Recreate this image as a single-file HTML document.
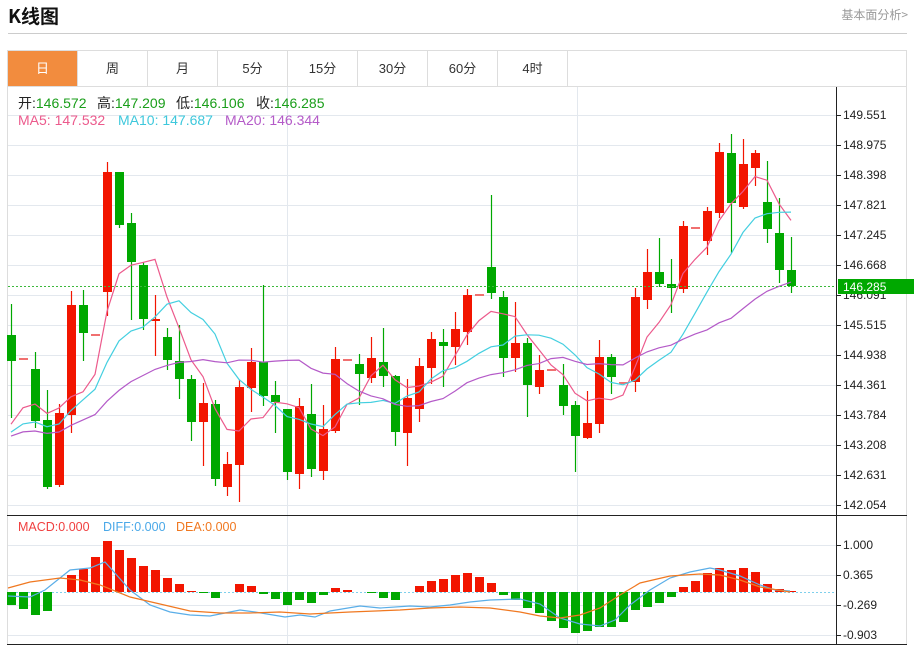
<!DOCTYPE html>
<html><head><meta charset="utf-8"><style>
*{margin:0;padding:0;box-sizing:border-box}
body{width:914px;height:647px;background:#fff;font-family:"Liberation Sans","Noto Sans CJK SC",sans-serif;position:relative;overflow:hidden}
.t{position:absolute;left:8px;top:2px;font-size:19px;font-weight:bold;color:#111;font-family:"Noto Sans CJK SC",sans-serif}
.more{position:absolute;right:6px;top:6px;font-size:12px;color:#999;font-family:"Noto Sans CJK SC",sans-serif}
.hl{position:absolute;left:8px;top:33px;width:899px;height:1px;background:#ccc}
.tabs{position:absolute;left:7px;top:50px;width:900px;height:37px;border:1px solid #ddd;display:flex}
.tabs div{width:70px;height:35px;border-right:1px solid #ddd;text-align:center;line-height:35px;font-size:13px;color:#333;font-family:"Liberation Sans","Noto Sans CJK SC",sans-serif}
.tabs div.on{background:#f28c3e;color:#fff}
svg{position:absolute;left:0;top:0}
</style></head><body>
<div class="t">K线图</div>
<div class="more">基本面分析&gt;</div>
<div class="hl"></div>
<div class="tabs"><div class="on">日</div><div>周</div><div>月</div><div>5分</div><div>15分</div><div>30分</div><div>60分</div><div>4时</div></div>
<svg id="s" width="914" height="647" xmlns="http://www.w3.org/2000/svg"></svg>
<script>
var C=[
[335,361,304,418,0],[358,358,358,358,2],[369,421,352,428,0],[420,487,390,489,0],[485,413,404,487,1],
[415,305,291,433,1],[305,333,290,361,0],[334,334,334,334,2],[292,172,162,316,1],[172,225,172,228,0],
[223,262,213,320,0],[265,319,262,330,0],[319,319,295,356,3],[337,360,328,370,0],[361,379,325,399,0],
[379,422,375,441,0],[422,403,383,466,1],[404,479,400,486,0],[487,464,452,496,1],[465,387,380,502,1],
[388,362,348,412,1],[362,396,285,406,0],[395,402,381,433,0],[409,472,409,480,0],[474,406,398,489,1],
[414,469,384,477,0],[471,429,405,480,1],[431,359,347,433,1],[359,359,359,359,2],[364,374,354,405,0],
[378,358,337,383,1],[362,376,328,387,0],[376,432,375,446,0],[433,398,379,466,1],[409,366,358,422,1],
[368,339,332,384,1],[342,346,329,387,0],[347,329,312,365,1],[332,295,289,345,1],[294,294,294,294,2],
[267,293,195,299,0],[297,358,291,377,0],[358,343,302,372,1],[343,385,338,417,0],[387,370,355,394,1],
[369,369,369,369,2],[385,406,364,415,0],[405,436,401,472,0],[438,423,391,439,1],[424,357,340,433,1],
[357,377,354,394,0],[382,382,382,382,2],[382,297,288,392,1],[300,272,249,309,1],[272,284,238,287,0],
[284,288,259,313,0],[289,226,221,293,1],[227,227,227,227,2],[241,211,207,255,1],[213,152,143,218,1],
[153,203,134,253,0],[207,164,139,209,1],[168,153,150,186,1],[202,229,161,243,0],[233,270,198,283,0],
[270,286,237,293,0]];
var M=[605,609,615,611,592,575,569,557,541,550,558,566,570,578,584,591,593,598,592,584,586,594,599,605,600,603,595,588,590,592,593,598,600,592,586,581,579,575,573,577,583,595,600,608,613,621,628,633,631,627,627,622,610,607,603,597,587,581,573,568,570,568,572,584,589,591];
var X=function(i){return 11+12*i};
var h='';
var ticks=[[115,'149.551'],[145,'148.975'],[175,'148.398'],[205,'147.821'],[235,'147.245'],[265,'146.668'],[295,'146.091'],[325,'145.515'],[355,'144.938'],[385,'144.361'],[415,'143.784'],[445,'143.208'],[475,'142.631'],[505,'142.054']];
ticks.forEach(function(t){h+='<line x1="8" x2="836" y1="'+t[0]+'.5" y2="'+t[0]+'.5" stroke="#e3e8ee"/>'});
[[545,'1.000'],[575,'0.365'],[605,'-0.269'],[635,'-0.903']].forEach(function(t){h+='<line x1="8" x2="836" y1="'+t[0]+'.5" y2="'+t[0]+'.5" stroke="#e3e8ee"/>';ticks.push(t)});
h+='<line x1="287.5" x2="287.5" y1="87" y2="645" stroke="#e3e8ee"/><line x1="577.5" x2="577.5" y1="87" y2="645" stroke="#e3e8ee"/>';
h+='<line x1="836.5" x2="836.5" y1="87" y2="645" stroke="#222"/>';
h+='<line x1="7.5" x2="7.5" y1="87" y2="645" stroke="#ddd"/><line x1="906.5" x2="906.5" y1="87" y2="645" stroke="#ddd"/>';
h+='<line x1="7" x2="907" y1="515.5" y2="515.5" stroke="#222"/><line x1="7" x2="907" y1="644.5" y2="644.5" stroke="#222"/>';
ticks.forEach(function(t){h+='<line x1="836" x2="841" y1="'+t[0]+'.5" y2="'+t[0]+'.5" stroke="#222"/><text x="843" y="'+(t[0]+4)+'" font-size="12" fill="#222">'+t[1]+'</text>'});
C.forEach(function(c,i){var x=X(i),col=c[4]==0?'#00a800':'#f21500';if(c[4]==2)col='#f07070';
 h+='<line x1="'+(x+.5)+'" x2="'+(x+.5)+'" y1="'+c[2]+'" y2="'+c[3]+'" stroke="'+col+'" stroke-width="1.2"/>';
 var t=Math.min(c[0],c[1]),b=Math.max(c[0],c[1]);if(b-t<2)b=t+2;
 h+='<rect x="'+(x-4)+'" y="'+t+'" width="9" height="'+(b-t)+'" fill="'+col+'"/>';});
var cl=C.map(function(c){return c[1]});
function ma(n,col){var p=[];for(var i=0;i<cl.length;i++){var s=0,k=0;for(var j=i-n+1;j<=i;j++){s+=j>=0?cl[j]:440;k++}p.push(X(i)+','+(s/k).toFixed(1))}
 h+='<polyline points="'+p.join(' ')+'" fill="none" stroke="'+col+'" stroke-width="1.2"/>';}
ma(5,'#ec5a8c');ma(10,'#44cfe0');ma(20,'#b45ac8');
h+='<line x1="8" x2="836" y1="286.5" y2="286.5" stroke="#3cb83c" stroke-dasharray="2,2"/>';
h+='<rect x="838" y="279" width="76" height="15" fill="#00a800"/><text x="843" y="291" font-size="12" fill="#fff">146.285</text>';
h+='<line x1="8" x2="836" y1="592.5" y2="592.5" stroke="#7fd0ec" stroke-dasharray="2,2"/>';
M.forEach(function(v,i){var x=X(i);if(Math.abs(v-592)<1)return;var t=Math.min(v,592),b=Math.max(v,592);
 h+='<rect x="'+(x-4)+'" y="'+t+'" width="9" height="'+(b-t)+'" fill="'+(v<592?'#f21500':'#00a800')+'"/>';});
h+='<polyline fill="none" stroke="#5aaee8" stroke-width="1.2" points="8,596 30,597 45,590 70,570 90,568 105,562 130,590 150,605 170,612 190,615 210,616 225,613 240,610 255,612 285,617 300,615 315,617 330,611 360,606 380,608 410,606 430,607 450,605 470,602 490,600 520,599 540,604 560,618 580,624 600,626 615,620 630,605 650,590 670,578 690,572 710,568 720,570 740,576 760,585 775,590 790,591"/>';
h+='<polyline fill="none" stroke="#f07820" stroke-width="1.2" points="8,588 30,582 60,578 80,580 100,585 130,597 160,604 190,611 220,613 250,613 280,612 310,614 350,612 400,610 430,608 460,607 490,608 520,612 540,616 560,618 580,615 600,608 620,595 640,583 670,576 700,574 720,575 740,580 760,587 790,592"/>';
h+='<text y="108" font-size="14"><tspan x="18" fill="#222">开:</tspan><tspan fill="#1a9e1a">146.572</tspan><tspan fill="#222" x="97">高:</tspan><tspan fill="#1a9e1a">147.209</tspan><tspan fill="#222" x="176">低:</tspan><tspan fill="#1a9e1a">146.106</tspan><tspan fill="#222" x="256">收:</tspan><tspan fill="#1a9e1a">146.285</tspan></text>';
h+='<text y="125" font-size="14"><tspan x="18" fill="#ec5a8c">MA5: 147.532</tspan><tspan x="118" fill="#3ec8dc">MA10: 147.687</tspan><tspan x="225" fill="#b45ac8">MA20: 146.344</tspan></text>';
h+='<text y="531" font-size="12.5"><tspan x="18" fill="#f04040">MACD:0.000</tspan><tspan x="103" fill="#4aa8e8">DIFF:0.000</tspan><tspan x="176" fill="#f07820">DEA:0.000</tspan></text>';
document.getElementById('s').innerHTML=h;
</script>
</body></html>
